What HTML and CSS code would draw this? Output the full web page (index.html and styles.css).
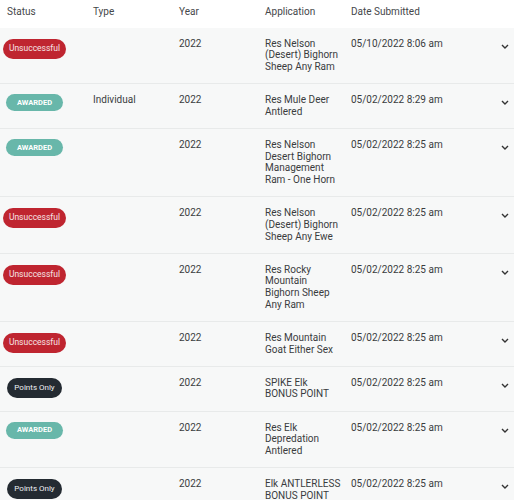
FILE: index.html
```html
<!DOCTYPE html>
<html lang="en">
<head>
<meta charset="utf-8">
<title>Applications</title>
<link rel="stylesheet" href="styles.css">
</head>
<body>
<div class="table">
  <div class="row head">
    <div class="cell">Status</div>
    <div class="cell">Type</div>
    <div class="cell">Year</div>
    <div class="cell">Application</div>
    <div class="cell">Date Submitted</div>
    <div class="cell"></div>
  </div>

  <div class="row">
    <div class="cell status"><span class="badge bad">Unsuccessful</span></div>
    <div class="cell"></div>
    <div class="cell">2022</div>
    <div class="cell app">Res Nelson (Desert) Bighorn Sheep Any Ram</div>
    <div class="cell">05/10/2022 8:06 am</div>
    <div class="cell chev"><svg viewBox="0 0 8 5" width="8" height="5"><path d="M1 1l3 3 3-3" fill="none" stroke="#333" stroke-width="1.4"/></svg></div>
  </div>

  <div class="row">
    <div class="cell status"><span class="badge ok">AWARDED</span></div>
    <div class="cell">Individual</div>
    <div class="cell">2022</div>
    <div class="cell app">Res Mule Deer Antlered</div>
    <div class="cell">05/02/2022 8:29 am</div>
    <div class="cell chev"><svg viewBox="0 0 8 5" width="8" height="5"><path d="M1 1l3 3 3-3" fill="none" stroke="#333" stroke-width="1.4"/></svg></div>
  </div>

  <div class="row">
    <div class="cell status"><span class="badge ok">AWARDED</span></div>
    <div class="cell"></div>
    <div class="cell">2022</div>
    <div class="cell app">Res Nelson Desert Bighorn Management Ram - One Horn</div>
    <div class="cell">05/02/2022 8:25 am</div>
    <div class="cell chev"><svg viewBox="0 0 8 5" width="8" height="5"><path d="M1 1l3 3 3-3" fill="none" stroke="#333" stroke-width="1.4"/></svg></div>
  </div>

  <div class="row">
    <div class="cell status"><span class="badge bad">Unsuccessful</span></div>
    <div class="cell"></div>
    <div class="cell">2022</div>
    <div class="cell app">Res Nelson (Desert) Bighorn Sheep Any Ewe</div>
    <div class="cell">05/02/2022 8:25 am</div>
    <div class="cell chev"><svg viewBox="0 0 8 5" width="8" height="5"><path d="M1 1l3 3 3-3" fill="none" stroke="#333" stroke-width="1.4"/></svg></div>
  </div>

  <div class="row">
    <div class="cell status"><span class="badge bad">Unsuccessful</span></div>
    <div class="cell"></div>
    <div class="cell">2022</div>
    <div class="cell app">Res Rocky Mountain Bighorn Sheep Any Ram</div>
    <div class="cell">05/02/2022 8:25 am</div>
    <div class="cell chev"><svg viewBox="0 0 8 5" width="8" height="5"><path d="M1 1l3 3 3-3" fill="none" stroke="#333" stroke-width="1.4"/></svg></div>
  </div>

  <div class="row">
    <div class="cell status"><span class="badge bad">Unsuccessful</span></div>
    <div class="cell"></div>
    <div class="cell">2022</div>
    <div class="cell app">Res Mountain Goat Either Sex</div>
    <div class="cell">05/02/2022 8:25 am</div>
    <div class="cell chev"><svg viewBox="0 0 8 5" width="8" height="5"><path d="M1 1l3 3 3-3" fill="none" stroke="#333" stroke-width="1.4"/></svg></div>
  </div>

  <div class="row">
    <div class="cell status"><span class="badge pts">Points Only</span></div>
    <div class="cell"></div>
    <div class="cell">2022</div>
    <div class="cell app">SPIKE Elk BONUS POINT</div>
    <div class="cell">05/02/2022 8:25 am</div>
    <div class="cell chev"><svg viewBox="0 0 8 5" width="8" height="5"><path d="M1 1l3 3 3-3" fill="none" stroke="#333" stroke-width="1.4"/></svg></div>
  </div>

  <div class="row">
    <div class="cell status"><span class="badge ok">AWARDED</span></div>
    <div class="cell"></div>
    <div class="cell">2022</div>
    <div class="cell app">Res Elk Depredation Antlered</div>
    <div class="cell">05/02/2022 8:25 am</div>
    <div class="cell chev"><svg viewBox="0 0 8 5" width="8" height="5"><path d="M1 1l3 3 3-3" fill="none" stroke="#333" stroke-width="1.4"/></svg></div>
  </div>

  <div class="row">
    <div class="cell status"><span class="badge pts">Points Only</span></div>
    <div class="cell"></div>
    <div class="cell">2022</div>
    <div class="cell app">Elk ANTLERLESS BONUS POINT</div>
    <div class="cell">05/02/2022 8:25 am</div>
    <div class="cell chev"><svg viewBox="0 0 8 5" width="8" height="5"><path d="M1 1l3 3 3-3" fill="none" stroke="#333" stroke-width="1.4"/></svg></div>
  </div>
</div>
</body>
</html>
```

FILE: styles.css
```css
html, body {
  margin: 0;
  padding: 0;
  background: #f7f8f8;
}

body {
  font-family: Roboto, "Liberation Sans", Arial, sans-serif;
  font-size: 10px;
  line-height: 11.7px;
  color: #3a3c3e;
}

.table {
  width: 514px;
}

.row {
  display: grid;
  grid-template-columns: 86px 86px 86px 86px 1fr 24px;
  background: #f7f8f8;
  border-bottom: 1px solid #e8eaea;
}

.row.head {
  background: #ffffff;
  border-bottom: none;
  color: #45474a;
}

.row.head .cell {
  padding-top: 6px;
  padding-bottom: 10px;
}

.cell {
  padding: 10px 6px 10.4px 7px;
}

.cell.app {
  padding-right: 3px;
}

.cell.status {
  padding-left: 0;
  padding-right: 0;
  width: 69px;
  display: flex;
  justify-content: center;
  align-items: flex-start;
}

.badge {
  display: inline-flex;
  align-items: center;
  justify-content: center;
  color: #ffffff;
  border-radius: 10px;
  white-space: nowrap;
  margin-top: 1px;
}

.badge.bad {
  background: #bf2530;
  height: 20px;
  width: 63px;
  font-size: 8.5px;
  color: #f6e4e5;
}

.badge.ok {
  background: #68b7aa;
  height: 17px;
  width: 57px;
  font-size: 7.5px;
  font-weight: 700;
  border-radius: 9px;
  margin-top: 0;
}

.badge.pts {
  background: #242b32;
  height: 20px;
  width: 55px;
  font-size: 8px;
  color: #eef0f2;
}

.cell.chev {
  padding: 16px 0 0 11px;
  display: flex;
  justify-content: flex-start;
}

.chev svg {
  display: block;
}
```
